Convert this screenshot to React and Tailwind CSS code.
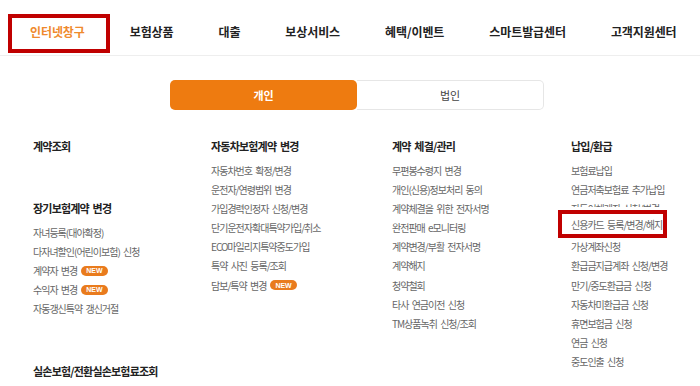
import React from 'react';

const navItems = ['인터넷창구', '보험상품', '대출', '보상서비스', '혜택/이벤트', '스마트발급센터', '고객지원센터'];

const columns = [
  [
    { title: '계약조회', items: [] },
    {
      title: '장기보험계약 변경',
      gap: 'mt-[42px]',
      items: [
        { label: '자녀등록(대아확정)' },
        { label: '다자녀할인(어린이보험) 신청' },
        { label: '계약자 변경', isNew: true },
        { label: '수익자 변경', isNew: true },
        { label: '자동갱신특약 갱신거절' },
      ],
    },
    { title: '실손보험/전환실손보험료조회', gap: 'mt-[43px]', items: [] },
  ],
  [
    {
      title: '자동차보험계약 변경',
      items: [
        { label: '자동차번호 확정/변경' },
        { label: '운전자/연령범위 변경' },
        { label: '가입경력인정자 신청/변경' },
        { label: '단기운전자확대특약가입/취소' },
        { label: 'ECO마일리지특약중도가입' },
        { label: '특약 사진 등록/조회' },
        { label: '담보/특약 변경', isNew: true },
      ],
    },
  ],
  [
    {
      title: '계약 체결/관리',
      items: [
        { label: '무편봉수령지 변경' },
        { label: '개인(신용)정보처리 동의' },
        { label: '계약체결을 위한 전자서명' },
        { label: '완전판매 e모니터링' },
        { label: '계약변경/부활 전자서명' },
        { label: '계약해지' },
        { label: '청약철회' },
        { label: '타사 연금이전 신청' },
        { label: 'TM상품녹취 신청/조회' },
      ],
    },
  ],
  [
    {
      title: '납입/환급',
      items: [
        { label: '보험료납입' },
        { label: '연금저축보험료 추가납입' },
        { label: '자동이체계좌 신청/변경' },
        { label: '신용카드 등록/변경/해지' },
        { label: '가상계좌신청' },
        { label: '환급금지급계좌 신청/변경' },
        { label: '만기/중도환급금 신청' },
        { label: '자동차미환급금 신청' },
        { label: '휴면보험금 신청' },
        { label: '연금 신청' },
        { label: '중도인출 신청' },
      ],
    },
  ],
];

const NewBadge = () => (
  <span className="ml-[4px] inline-flex h-[10px] items-center rounded-full bg-[#e97b1d] px-[5px] text-[7px] font-bold leading-none tracking-normal text-white [font-family:'Liberation_Sans',sans-serif]">
    NEW
  </span>
);

const Section = ({ section }) => (
  <div className={section.gap || ''}>
    <h3 className="mb-[5px] text-[11px] font-bold leading-[20px] tracking-[-0.8px] text-[#222] [word-spacing:2px]">
      {section.title}
    </h3>
    <ul>
      {section.items.map((it) => (
        <li key={it.label} className="flex items-center whitespace-pre text-[10px] leading-[19.1px] tracking-[-1px] text-[#666] [word-spacing:2px]">
          {it.label}
          {it.isNew && <NewBadge />}
        </li>
      ))}
    </ul>
  </div>
);

export default function App() {
  return (
    <div className="relative h-[386px] w-[700px] overflow-hidden bg-white [font-family:'Noto_Sans_CJK_KR','Noto_Sans',sans-serif]">
      {/* Top navigation */}
      <nav className="flex h-[56px] items-center gap-[45px] border-b border-[#eeeeee] pl-[30px] pt-[9px]">
        {navItems.map((n, i) => (
          <span
            key={n}
            className={`whitespace-nowrap text-[12px] font-bold tracking-[-0.1px] ${i === 0 ? 'text-[#ef8a2d]' : 'text-[#222]'}`}
          >
            {n}
          </span>
        ))}
      </nav>

      {/* 개인 / 법인 toggle */}
      <div className="mt-[24px] flex justify-center pl-[14px]">
        <button className="flex h-[30px] w-[187px] items-center justify-center rounded-[5px] bg-[#ee7b10] text-[11px] font-bold text-white">
          개인
        </button>
        <button className="flex h-[30px] w-[187px] items-center justify-center rounded-r-[5px] border border-l-0 border-[#e6e6e6] text-[11px] text-[#444]">
          법인
        </button>
      </div>

      {/* Menu columns */}
      <div className="mt-[26px] grid grid-cols-[178px_181px_179px_1fr] pl-[33px]">
        {columns.map((col, ci) => (
          <div key={ci}>
            {col.map((s) => (
              <Section key={s.title} section={s} />
            ))}
          </div>
        ))}
      </div>

      {/* Highlight boxes */}
      <div className="pointer-events-none absolute left-[8px] top-[14px] h-[39px] w-[102px] border-[4px] border-[#c00000]" />
      <div className="absolute left-[558px] top-[210px] flex h-[28px] w-[109px] items-center whitespace-pre border-[4px] border-[#c00000] bg-white pl-[9px] text-[10px] tracking-[-1px] text-[#666] shadow-[0_0_0_3px_#ffffff] [word-spacing:2px]">
        신용카드 등록/변경/해지
      </div>
    </div>
  );
}
